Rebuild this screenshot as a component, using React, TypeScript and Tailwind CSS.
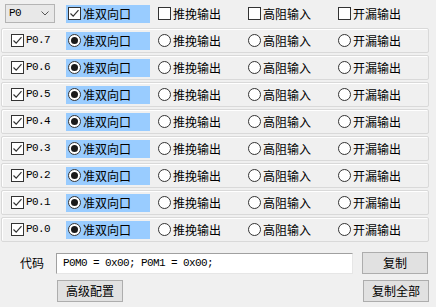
import React from 'react';

const cjk = "font-['Noto_Sans_CJK_SC','Noto_Sans',sans-serif]";
const mono = "font-['Liberation_Mono','DejaVu_Sans_Mono',monospace]";

const pins = ['P0.7', 'P0.6', 'P0.5', 'P0.4', 'P0.3', 'P0.2', 'P0.1', 'P0.0'];
const modes = ['准双向口', '推挽输出', '高阻输入', '开漏输出'];

function Check({ on }: { on: boolean }) {
  return (
    <span className="w-[13px] h-[13px] shrink-0 border border-[#333333] bg-white flex items-center justify-center">
      {on && (
        <svg width="11" height="11" viewBox="0 0 11 11">
          <path d="M1.5 5.5 L4.2 8.2 L9.5 2.2" fill="none" stroke="#333333" strokeWidth="1.2" />
        </svg>
      )}
    </span>
  );
}

function Radio({ on }: { on: boolean }) {
  return (
    <span className="w-[13px] h-[13px] shrink-0 rounded-full border border-[#333333] bg-white flex items-center justify-center">
      {on && <span className="w-[7px] h-[7px] rounded-full bg-[#1a1a1a]" />}
    </span>
  );
}

function Option({ label, radio, on, hl }: { label: string; radio: boolean; on: boolean; hl?: boolean }) {
  return (
    <div className="w-[90px] shrink-0 flex items-center">
      <div className={`flex items-center gap-[2px] pl-[2px] h-[18px] ${hl ? 'w-[84px] bg-[#99ccff]' : ''}`}>
        {radio ? <Radio on={on} /> : <Check on={on} />}
        <span className={`${cjk} text-[12px] leading-none text-black whitespace-nowrap`}>{label}</span>
      </div>
    </div>
  );
}

function Btn({ label, w }: { label: string; w: string }) {
  return (
    <div className={`${w} h-[22px] bg-[#e1e1e1] border border-[#adadad] flex items-center justify-center ${cjk} text-[12px] text-black`}>
      {label}
    </div>
  );
}

export default function App() {
  return (
    <div className="w-[436px] h-[307px] bg-[#f0f0f0] overflow-hidden flex flex-col">
      {/* header */}
      <div className="h-[27px] flex items-center">
        <div className="w-[66px] shrink-0 pl-[5px]">
          <div className="w-[50px] h-[19px] bg-[#e8e8e8] border border-[#b4b4b4] flex items-center justify-between pl-[3px] pr-[5px]">
            <span className={`${mono} text-[11px] tracking-[-0.6px] text-black`}>P0</span>
            <svg width="8" height="5" viewBox="0 0 8 5">
              <path d="M0.5 0.5 L4 4 L7.5 0.5" fill="none" stroke="#555" strokeWidth="1" />
            </svg>
          </div>
        </div>
        {modes.map((m, i) => (
          <Option key={m} label={m} radio={false} on={i === 0} hl={i === 0} />
        ))}
      </div>

      {/* pin rows */}
      <div className="mt-[1px] flex flex-col gap-[2px] pl-[1px]">
        {pins.map((p) => (
          <div
            key={p}
            className="w-[428px] h-[25px] border border-[#d9d9d9] rounded-[2px] shadow-[inset_1px_1px_0_#ffffff] flex items-center"
          >
            <div className="w-[64px] shrink-0 pl-[9px] flex items-center gap-[2px]">
              <Check on />
              <span className={`${mono} text-[11px] tracking-[-0.6px] text-black`}>{p}</span>
            </div>
            {modes.map((m, i) => (
              <Option key={m} label={m} radio on={i === 0} hl={i === 0} />
            ))}
          </div>
        ))}
      </div>

      {/* code area */}
      <div className="mt-[10px] flex items-center h-[22px]">
        <span className={`${cjk} text-[12px] text-black w-[56px] pl-[20px]`}>代码</span>
        <div className="w-[297px] h-[21px] bg-white border-t border-l border-[#a0a0a0] border-r border-b border-r-[#e6e6e6] border-b-[#e6e6e6] flex items-center pl-[6px]">
          <span className={`${mono} text-[11px] tracking-[-0.6px] text-black whitespace-pre`}>P0M0 = 0x00; P0M1 = 0x00;</span>
        </div>
        <div className="ml-[9px]">
          <Btn label="复制" w="w-[66px]" />
        </div>
      </div>
      <div className="mt-[6px] flex items-center">
        <div className="pl-[57px]">
          <Btn label="高级配置" w="w-[66px]" />
        </div>
        <div className="ml-[240px]">
          <Btn label="复制全部" w="w-[66px]" />
        </div>
      </div>
    </div>
  );
}
